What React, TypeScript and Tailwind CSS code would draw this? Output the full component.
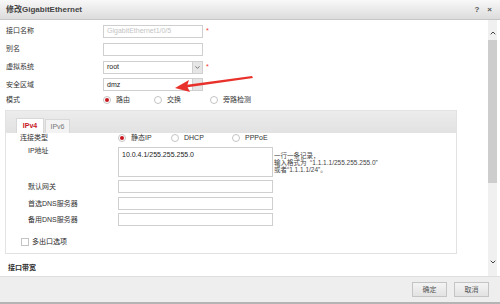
import { ChevronDown, ChevronUp } from 'lucide-react';

const font = { fontFamily: '"Liberation Sans", "Noto Sans CJK SC", sans-serif' };

function Radio({ checked, label, width }: { checked?: boolean; label: string; width: string }) {
  return (
    <div className={`flex items-center gap-[5px] ${width}`}>
      <span className="flex h-[8px] w-[8px] items-center justify-center rounded-full border border-[#c4c4c4] bg-white">
        {checked && <span className="h-[4px] w-[4px] rounded-full bg-[#c8161d]" />}
      </span>
      <span>{label}</span>
    </div>
  );
}

function Field({ label, children, h = 'h-[18px]' }: { label: string; children?: React.ReactNode; h?: string }) {
  return (
    <div className={`flex items-center ${h}`}>
      <div className="w-[97px] shrink-0">{label}</div>
      {children}
    </div>
  );
}

const box = 'h-[13px] w-[100px] border border-[#cfcfcf] bg-white';

function PanelRow({ label, children, className = '' }: { label: string; children?: React.ReactNode; className?: string }) {
  return (
    <div className={`flex pl-[22px] ${className}`}>
      <div className="w-[90px] shrink-0">{label}</div>
      {children}
    </div>
  );
}

export default function App() {
  return (
    <div style={font} className="relative h-[304px] w-[500px] overflow-hidden bg-white text-[7px] leading-[8px] text-[#333]">
      {/* title bar */}
      <div className="flex h-[20px] items-center justify-between border-b border-[#c6c6c6] bg-gradient-to-b from-[#f8f8f8] to-[#dcdcdc] pl-[6px] pr-[8px]">
        <span className="text-[8px] font-bold text-[#444]">修改GigabitEthernet</span>
        <div className="flex items-center gap-[8px] text-[8px] font-bold text-[#555]">
          <span>?</span>
          <span>×</span>
        </div>
      </div>

      <div className="flex h-[256px]">
        <div className="w-[488px] overflow-hidden">
          <div className="pl-[6px] pt-[2px]">
            <Field label="接口名称">
              <div className={`${box} flex items-center px-[3px] text-[#c4c4c4]`}>GigabitEthernet1/0/5</div>
              <span className="ml-[3px] text-[#e33]">*</span>
            </Field>
            <Field label="别名">
              <div className={box} />
            </Field>
            <Field label="虚拟系统">
              <div className={`${box} flex items-center justify-between pl-[3px]`}>
                <span className="text-[#222]">root</span>
                <span className="flex h-full w-[10px] items-center justify-center border-l border-[#cfcfcf] bg-[#e6e6e6]">
                  <ChevronDown className="h-[7px] w-[7px] text-[#666]" strokeWidth={3} />
                </span>
              </div>
              <span className="ml-[3px] text-[#e33]">*</span>
            </Field>
            <Field label="安全区域" h="h-[17px]">
              <div className={`${box} flex items-center justify-between pl-[3px]`}>
                <span className="text-[#222]">dmz</span>
                <span className="h-full w-[10px] border-l border-[#cfcfcf] bg-[#e6e6e6]" />
              </div>
            </Field>
            <Field label="模式" h="h-[14px]">
              <Radio checked label="路由" width="w-[51px]" />
              <Radio label="交换" width="w-[56px]" />
              <Radio label="旁路检测" width="w-[60px]" />
            </Field>
          </div>

          {/* tab panel */}
          <div className="ml-[5px] mt-[3px] w-[452px] border border-[#e2e2e2]">
            <div className="flex h-[22px] items-end gap-[1px] bg-gradient-to-b from-[#ececec] to-[#e2e2e2] pl-[10px]">
              <div className="flex h-[15px] w-[28px] items-center justify-center border border-b-0 border-[#d8d8d8] bg-white font-bold text-[#c8161d]">IPv4</div>
              <div className="flex h-[14px] w-[25px] items-center justify-center border border-b-0 border-[#d8d8d8] bg-[#f3f3f3] text-[#777]">IPv6</div>
            </div>
            <div className="h-[120px] bg-white">
              <div className="flex h-[10px] items-center pl-[14px]">
                <div className="w-[98px]">连接类型</div>
                <Radio checked label="静态IP" width="w-[53px]" />
                <Radio label="DHCP" width="w-[61px]" />
                <Radio label="PPPoE" width="w-[60px]" />
              </div>
              <PanelRow label="IP地址" className="mt-[4px]">
                <div className="h-[30px] w-[155px] border border-[#cfcfcf] px-[3px] pt-[3px] text-[#222]">10.0.4.1/255.255.255.0</div>
                <div className="ml-[1px] pt-[5px] text-[6.5px] leading-[7px] text-[#444]">
                  <div>一行一条记录，</div>
                  <div>输入格式为&nbsp;&nbsp;“1.1.1.1/255.255.255.0”</div>
                  <div>或者“1.1.1.1/24”。</div>
                </div>
              </PanelRow>
              <PanelRow label="默认网关" className="mt-[3px] items-center">
                <div className="h-[13px] w-[155px] border border-[#cfcfcf]" />
              </PanelRow>
              <PanelRow label="首选DNS服务器" className="mt-[4px] items-center">
                <div className="h-[13px] w-[155px] border border-[#cfcfcf]" />
              </PanelRow>
              <PanelRow label="备用DNS服务器" className="mt-[3px] items-center">
                <div className="h-[13px] w-[155px] border border-[#cfcfcf]" />
              </PanelRow>
              <div className="mt-[12px] flex items-center gap-[3px] pl-[15px]">
                <span className="h-[8px] w-[8px] border border-[#c4c4c4] bg-white" />
                <span className="text-[#222]">多出口选项</span>
              </div>
            </div>
          </div>

          <div className="flex h-[22px] items-end pb-[4px] pl-[8px] font-bold text-[#333]">接口带宽</div>
        </div>

        {/* scrollbar */}
        <div className="flex w-[9px] flex-col items-center bg-[#f0f0f0]">
          <ChevronUp className="mt-[9px] h-[8px] w-[8px] text-[#444]" strokeWidth={3} />
          <div className="mt-[3px] h-[143px] w-[9px] bg-[#cdcdcd]" />
          <ChevronDown className="mt-[75px] h-[8px] w-[8px] text-[#444]" strokeWidth={3} />
        </div>
      </div>

      {/* footer */}
      <div className="flex h-[26px] items-center justify-end gap-[7px] border-t border-[#dedede] bg-[#eeeeee] pr-[11px]">
        <button className="h-[15px] w-[35px] border border-[#c4c4c4] bg-gradient-to-b from-[#f4f4f4] to-[#e2e2e2] text-[7px] text-[#555]">确定</button>
        <button className="h-[15px] w-[35px] border border-[#c4c4c4] bg-gradient-to-b from-[#f4f4f4] to-[#e2e2e2] text-[7px] text-[#555]">取消</button>
      </div>
      <div className="h-[2px] bg-[#b4b4b4]" />

      {/* annotation arrow */}
      <svg className="pointer-events-none absolute left-0 top-0" width="500" height="304" viewBox="0 0 500 304">
        <polygon points="252,76 253,78 186,87.5 185,85" fill="#e8312b" />
        <polygon points="175,88 189,80 187,86 190,92" fill="#e8312b" />
      </svg>
    </div>
  );
}
